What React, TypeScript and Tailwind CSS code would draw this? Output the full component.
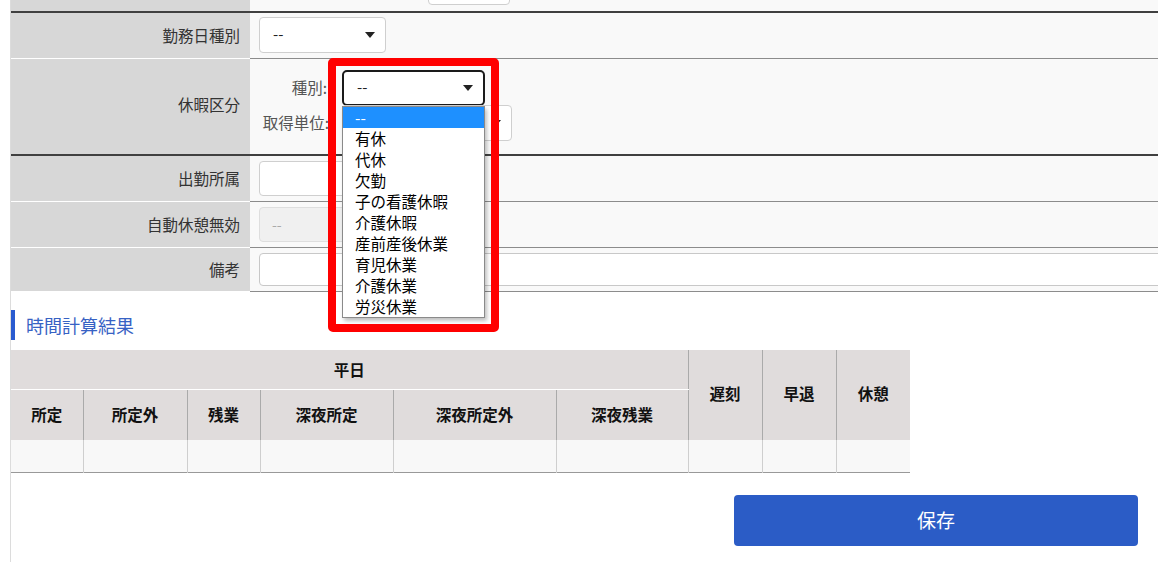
import React from "react";

const options = ["--", "有休", "代休", "欠勤", "子の看護休暇", "介護休暇", "産前産後休業", "育児休業", "介護休業", "労災休業"];

const columns = [
  { label: "所定", w: "w-[72px]" },
  { label: "所定外", w: "w-[104px]" },
  { label: "残業", w: "w-[73px]" },
  { label: "深夜所定", w: "w-[133px]" },
  { label: "深夜所定外", w: "w-[163px]" },
  { label: "深夜残業", w: "w-[132px]" },
];

function Arrow() {
  return (
    <svg width="10" height="6" viewBox="0 0 10 6" className="shrink-0">
      <path d="M0 0H10L5 6Z" fill="#222" />
    </svg>
  );
}

function Select({ className, focused }: { className: string; focused?: boolean }) {
  return (
    <div
      className={`flex items-center justify-between bg-white pl-[13px] pr-[10px] text-[15px] text-[#222] ${
        focused ? "border-2 border-[#1a1a1a] rounded-[5px]" : "border border-[#cfcfcf] rounded-[4px]"
      } ${className}`}
    >
      <span>--</span>
      <Arrow />
    </div>
  );
}

function Label({ children, className = "" }: { children: React.ReactNode; className?: string }) {
  return (
    <div className={`w-[239px] shrink-0 bg-[#d7d7d7] flex items-center justify-end pr-[10px] text-[15.5px] text-[#333] ${className}`}>
      {children}
    </div>
  );
}

export default function App() {
  return (
    <div className="relative w-[1158px] h-[562px] overflow-hidden bg-white font-['Noto_Sans_CJK_JP','Noto_Sans',sans-serif]">
      <div className="ml-[10px] h-full border-l border-[#dcdcdc]">
        {/* form */}
        <div className="flex h-[13px] border-b-2 border-[#404040]">
          <div className="w-[239px] bg-[#d7d7d7]" />
          <div className="flex-1 bg-[#f9f9f9] relative overflow-hidden">
            <div className="ml-[178px] -mt-[30px] h-[35px] w-[82px] rounded-[4px] border border-[#cfcfcf] bg-white" />
          </div>
        </div>

        <div className="flex h-[46px]">
          <Label className="border-b border-white">勤務日種別</Label>
          <div className="flex-1 bg-[#f9f9f9] border-b border-[#8c8c8c] flex items-center pl-[9px] pb-[2px]">
            <Select className="w-[127px] h-[36px]" />
          </div>
        </div>

        <div className="flex h-[97px] border-b-2 border-[#404040]">
          <Label className="pb-[4px]">休暇区分</Label>
          <div className="flex-1 bg-[#f9f9f9] pl-[9px] pt-[11px] flex flex-col">
            <div className="flex items-center h-[35px]">
              <div className="w-[68px] text-right text-[15.5px] text-[#555]">種別:</div>
              <Select focused className="ml-[15px] w-[143px] h-[36px]" />
            </div>
            <div className="flex items-center h-[36px]">
              <div className="w-[70px] text-right text-[15.5px] text-[#555]">取得単位:</div>
              <Select className="ml-[13px] w-[170px] h-[36px]" />
            </div>
          </div>
        </div>

        <div className="flex h-[46px]">
          <Label className="border-b border-white">出勤所属</Label>
          <div className="flex-1 bg-[#f9f9f9] border-b border-[#8c8c8c] flex items-center pl-[9px]">
            <div className="w-[220px] h-[35px] rounded-[4px] border border-[#cfcfcf] bg-white" />
          </div>
        </div>

        <div className="flex h-[46px]">
          <Label className="border-b border-white">自動休憩無効</Label>
          <div className="flex-1 bg-[#f9f9f9] border-b border-[#8c8c8c] flex items-center pl-[9px]">
            <div className="w-[220px] h-[35px] rounded-[4px] border border-[#dedede] bg-[#f0f0f0] flex items-center pl-[12px] text-[14px] text-[#aaa]">
              --
            </div>
          </div>
        </div>

        <div className="flex h-[44px]">
          <Label className="border-b border-white">備考</Label>
          <div className="flex-1 bg-[#f9f9f9] border-b border-[#8c8c8c] flex items-center pl-[9px]">
            <div className="w-[920px] h-[33px] rounded-[4px] border border-[#c8c8c8] bg-white" />
          </div>
        </div>

        {/* time calculation */}
        <div className="mt-[18px] h-[30px] border-l-4 border-[#2a5bd0] pl-[11px] flex items-center text-[18px] text-[#3762c4]">
          時間計算結果
        </div>

        <table className="mt-[10px] w-[899px] table-fixed border-collapse text-[15.5px] font-bold text-[#111]">
          <colgroup>
            {columns.map((c) => (
              <col key={c.label} className={c.w} />
            ))}
            <col className="w-[74px]" />
            <col className="w-[74px]" />
            <col className="w-[74px]" />
          </colgroup>
          <thead>
            <tr className="h-[39px] bg-[#e0dcdc]">
              <th colSpan={6} className="border-b border-white font-bold">
                平日
              </th>
              <th rowSpan={2} className="border-l border-[#aaa] font-bold pb-[2px]">遅刻</th>
              <th rowSpan={2} className="border-l border-[#aaa] font-bold pb-[2px]">早退</th>
              <th rowSpan={2} className="border-l border-[#aaa] font-bold pb-[2px]">休憩</th>
            </tr>
            <tr className="h-[51px] bg-[#e0dcdc]">
              {columns.map((c, i) => (
                <th key={c.label} className={`font-bold ${i > 0 ? "border-l border-[#aaa]" : ""}`}>
                  {c.label}
                </th>
              ))}
            </tr>
          </thead>
          <tbody>
            <tr className="h-[32px] bg-[#f8f8f8] border-b border-[#999]">
              {Array.from({ length: 9 }).map((_, i) => (
                <td key={i} className={i > 0 ? "border-l border-[#cfcfcf]" : ""} />
              ))}
            </tr>
          </tbody>
        </table>

        <div className="flex justify-end pr-[20px] mt-[22px]">
          <button className="w-[404px] h-[51px] rounded-[4px] bg-[#2b5cc6] text-white text-[19px]">保存</button>
        </div>
      </div>

      {/* opened dropdown with highlight annotation */}
      <div className="absolute left-[342px] top-[106px] w-[143px] border border-[#8a8a8a] bg-white shadow-[2px_3px_4px_rgba(0,0,0,0.25)] text-[15.5px] text-black">
        {options.map((o, i) => (
          <div key={o} className={`h-[21px] leading-[21px] pl-[12px] ${i === 0 ? "bg-[#1e90ff] text-white" : ""}`}>
            {o}
          </div>
        ))}
      </div>
      <div className="absolute left-[328px] top-[58px] w-[171px] h-[274px] border-[8px] border-[#ff0000] rounded-[5px]" />
    </div>
  );
}
